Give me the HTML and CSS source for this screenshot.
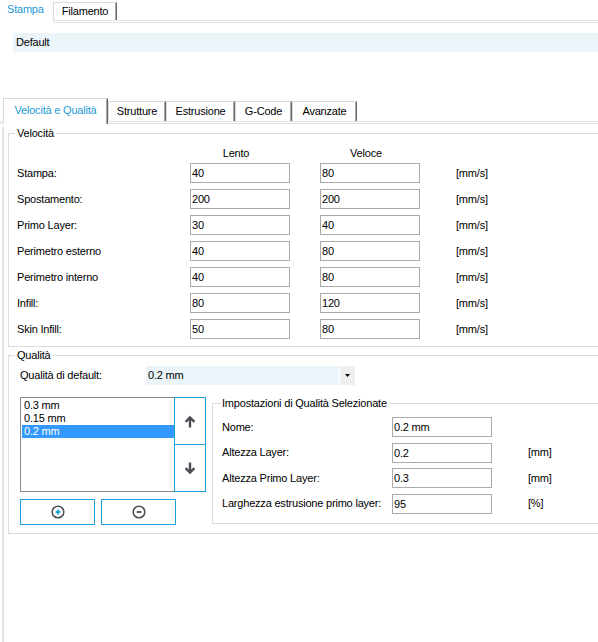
FILE: index.html
```html
<!DOCTYPE html>
<html lang="it">
<head>
  <meta charset="UTF-8">
  <title>Impostazioni di stampa</title>
  <link rel="stylesheet" href="styles.css">
</head>
<body>
  <div class="tabs top-tabs">
    <div class="tab active">Stampa</div>
    <div class="tab">Filamento</div>
  </div>
  <div class="profile">Default</div>

  <div class="tabs sub-tabs">
    <div class="tab active">Velocità e Qualità</div>
    <div class="tab">Strutture</div>
    <div class="tab">Estrusione</div>
    <div class="tab">G-Code</div>
    <div class="tab">Avanzate</div>
  </div>

  <div class="page">
    <!-- Velocità -->
    <fieldset class="group">
      <legend>Velocità</legend>
      <div class="speed-head">
        <span></span><span>Lento</span><span>Veloce</span>
      </div>
      <div class="speed-grid">
        <span>Stampa:</span><input class="field" value="40"><input class="field" value="80"><span class="unit">[mm/s]</span>
        <span>Spostamento:</span><input class="field" value="200"><input class="field" value="200"><span class="unit">[mm/s]</span>
        <span>Primo Layer:</span><input class="field" value="30"><input class="field" value="40"><span class="unit">[mm/s]</span>
        <span>Perimetro esterno</span><input class="field" value="40"><input class="field" value="80"><span class="unit">[mm/s]</span>
        <span>Perimetro interno</span><input class="field" value="40"><input class="field" value="80"><span class="unit">[mm/s]</span>
        <span>Infill:</span><input class="field" value="80"><input class="field" value="120"><span class="unit">[mm/s]</span>
        <span>Skin Infill:</span><input class="field" value="50"><input class="field" value="80"><span class="unit">[mm/s]</span>
      </div>
    </fieldset>

    <!-- Qualità -->
    <fieldset class="group quality">
      <legend>Qualità</legend>
      <div class="default-row">
        <span class="default-label">Qualità di default:</span>
        <div class="combo">
          <span class="combo-text">0.2 mm</span>
          <span class="combo-btn">
            <svg width="5" height="3" viewBox="0 0 5 3"><path d="M0 0h5L2.5 3z" fill="#000"/></svg>
          </span>
        </div>
      </div>
      <div class="quality-body">
        <div class="presets">
          <div class="preset-list">
            <div class="list">
              <div class="item">0.3 mm</div>
              <div class="item">0.15 mm</div>
              <div class="item selected">0.2 mm</div>
            </div>
            <div class="arrows">
              <button class="arrow-btn">
                <svg width="12" height="13" viewBox="0 0 12 13"><path d="M6 12.5V2.5M1.6 6.9L6 2.5l4.4 4.4" fill="none" stroke="#4a4d52" stroke-width="2.4"/></svg>
              </button>
              <button class="arrow-btn">
                <svg width="12" height="13" viewBox="0 0 12 13"><path d="M6 0.5v10M1.6 6.1L6 10.5l4.4-4.4" fill="none" stroke="#4a4d52" stroke-width="2.4"/></svg>
              </button>
            </div>
          </div>
          <div class="preset-actions">
            <button class="action-btn">
              <svg width="14" height="14" viewBox="0 0 14 14"><circle cx="7" cy="7" r="5.8" fill="none" stroke="#4a4d52" stroke-width="1.5"/><path d="M7 4.6v4.8M4.6 7h4.8" stroke="#1ba1dc" stroke-width="1.8"/></svg>
            </button>
            <button class="action-btn">
              <svg width="14" height="14" viewBox="0 0 14 14"><circle cx="7" cy="7" r="5.8" fill="none" stroke="#4a4d52" stroke-width="1.5"/><path d="M4.6 7h4.8" stroke="#4a4d52" stroke-width="1.8"/></svg>
            </button>
          </div>
        </div>

        <fieldset class="group selected-set">
          <legend>Impostazioni di Qualità Selezionate</legend>
          <div class="settings-grid">
            <span>Nome:</span><input class="field" value="0.2 mm"><span></span>
            <span>Altezza Layer:</span><input class="field" value="0.2"><span>[mm]</span>
            <span>Altezza Primo Layer:</span><input class="field" value="0.3"><span>[mm]</span>
            <span>Larghezza estrusione primo layer:</span><input class="field" value="95"><span>[%]</span>
          </div>
        </fieldset>
      </div>
    </fieldset>
  </div>
</body>
</html>
```

FILE: styles.css
```css
* {
  box-sizing: border-box;
}
body {
  margin: 0;
  height: 100vh;
  overflow: hidden;
  background: #fff;
  color: #000;
  font: 11px/13px "Liberation Sans", Arial, sans-serif;
  letter-spacing: -0.2px;
}

/* tab strips */
.tabs {
  display: flex;
  align-items: flex-end;
  border-bottom: 3px double #e3e3e3;
}
.tab {
  flex: none;
  height: 20px;
  padding-top: 3px;
  text-align: center;
  white-space: nowrap;
  background: #fff;
  border-top: 1px solid #dadada;
  border-left: 1px solid #dadada;
  border-right: 1px solid #6b6b6b;
  box-shadow: inset -1px 0 0 #a6a6a6;
}
.tab.active {
  color: #1c9ad6;
  margin-bottom: -3px;
}
.top-tabs {
  height: 23px;
}
.top-tabs .tab {
  height: 18px;
  padding-top: 2px;
}
.top-tabs .tab.active {
  height: 23px;
  padding: 3px 0 0 7px;
  text-align: left;
  border: 0;
  box-shadow: none;
}
.top-tabs .tab:nth-child(1) { width: 53px; }
.top-tabs .tab:nth-child(2) { width: 64px; }

.profile {
  margin: 10px 0 0 13px;
  height: 19px;
  line-height: 19px;
  padding-left: 3px;
  background: #ebf4f8;
}

.sub-tabs {
  height: 26px;
  margin-top: 46px;
  padding-left: 3px;
}
.sub-tabs .tab.active {
  height: 26px;
  padding-top: 5px;
}
.sub-tabs .tab:nth-child(1) { width: 105px; }
.sub-tabs .tab:nth-child(2) { width: 58px; }
.sub-tabs .tab:nth-child(3) { width: 69px; }
.sub-tabs .tab:nth-child(4) { width: 57px; }
.sub-tabs .tab:nth-child(5) { width: 65px; }

/* tab page */
.page {
  margin-left: 2px;
  border-left: 2px solid #e3e3e3;
  padding-left: 4px;
  height: calc(100vh - 124px);
}

.group {
  margin: 3px -20px 0 0;
  padding: 0;
  min-width: 0;
  border: 1px solid #dcdcdc;
}
.group legend {
  margin-left: 6px;
  padding: 0 2px;
  line-height: 13px;
}

.field {
  width: 100px;
  height: 20px;
  margin: 0;
  padding: 0 1px;
  border: 1px solid #aaaaaa;
  background: #fff;
  color: #000;
  font: inherit;
  letter-spacing: inherit;
  outline: none;
}

.speed-head {
  display: grid;
  grid-template-columns: 143px 100px 100px;
  column-gap: 30px;
  padding: 7px 0 0 8px;
  margin-bottom: 3px;
}
.speed-head span {
  text-align: center;
  padding-right: 8px;
}
.speed-grid {
  display: grid;
  grid-template-columns: 143px 100px 100px auto;
  column-gap: 30px;
  row-gap: 6px;
  align-items: center;
  padding: 0 0 7px 8px;
  white-space: nowrap;
}
.unit {
  padding-left: 6px;
}

/* Qualità */
.quality {
  margin-top: 2px;
}
.default-row {
  display: flex;
  align-items: center;
  padding: 4px 0 0 11px;
}
.default-label {
  width: 126px;
}
.combo {
  display: flex;
  width: 209px;
  height: 19px;
  background: #ebf4f8;
}
.combo-text {
  flex: 1;
  padding-left: 2px;
  line-height: 19px;
}
.combo-btn {
  width: 16px;
  display: flex;
  align-items: center;
  justify-content: center;
  background: #eeeeee;
  border-left: 1px solid #fff;
}

.quality-body {
  display: flex;
  align-items: flex-start;
  margin-top: 12px;
  padding: 0 0 8px 11px;
}
.presets {
  flex: none;
  width: 186px;
}
.preset-list {
  display: flex;
  height: 95px;
}
.list {
  width: 154px;
  padding: 1px 0 0 1px;
  border: 1px solid #828790;
  border-right: 0;
}
.item {
  height: 13px;
  line-height: 13px;
  padding-left: 2px;
}
.item.selected {
  background: #3399ff;
  color: #fff;
}
.arrows {
  width: 32px;
  display: flex;
  flex-direction: column;
}
.arrow-btn {
  flex: 1;
  display: flex;
  align-items: center;
  justify-content: center;
  padding: 0;
  background: #fff;
  border: 1px solid #1ba1dc;
}
.arrow-btn + .arrow-btn {
  border-top: 0;
}
.preset-actions {
  display: flex;
  gap: 6px;
  margin-top: 7px;
}
.action-btn {
  width: 75px;
  height: 26px;
  padding: 0;
  display: flex;
  align-items: center;
  justify-content: center;
  background: #fff;
  border: 1px solid #1ba1dc;
}

.selected-set {
  flex: 1;
  margin: 0 0 0 6px;
}
.selected-set legend {
  margin-left: 7px;
}
.settings-grid {
  display: grid;
  grid-template-columns: 134px 100px auto;
  column-gap: 36px;
  row-gap: 5.5px;
  align-items: center;
  padding: 7px 0 9px 9px;
  white-space: nowrap;
}
```
